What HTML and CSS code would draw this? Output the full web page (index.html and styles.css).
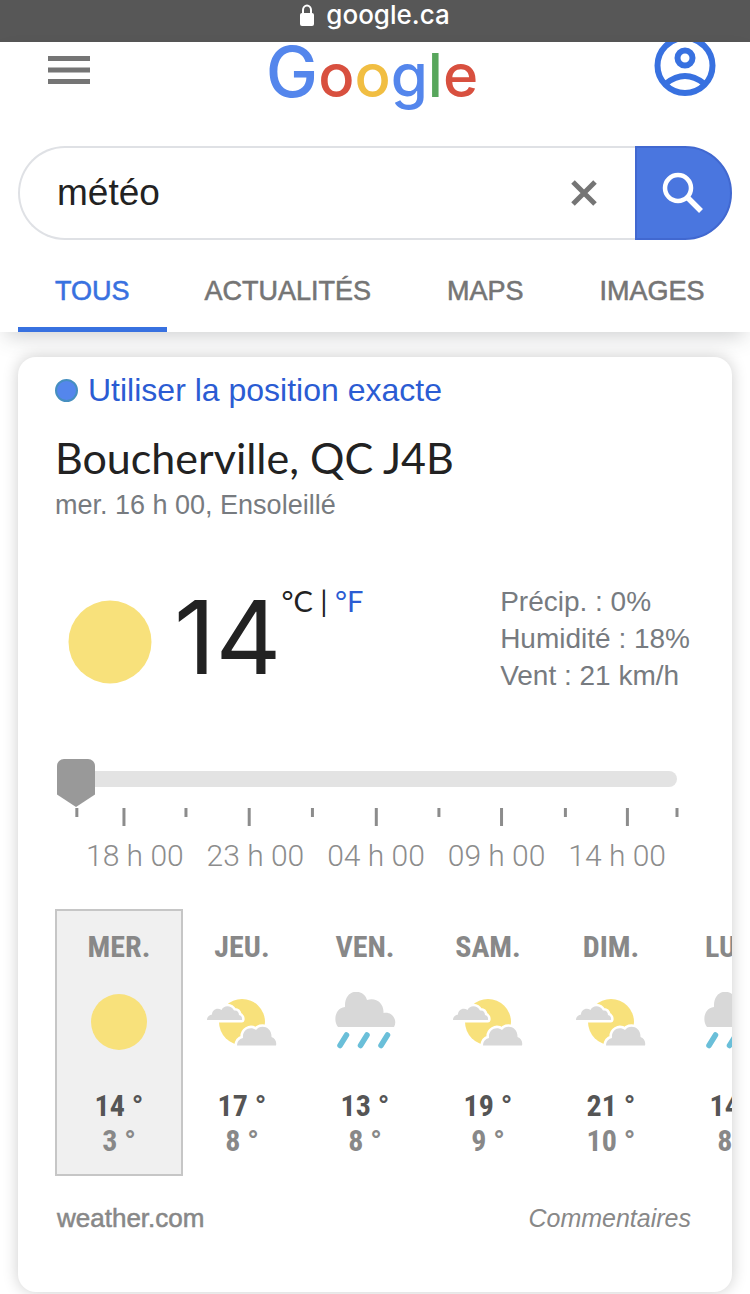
FILE: index.html
```html
<!DOCTYPE html>
<html lang="fr">
<head>
<meta charset="utf-8">
<meta name="viewport" content="width=device-width, initial-scale=1">
<title>météo - Recherche Google</title>
<link rel="stylesheet" href="styles.css">
</head>
<body>
<svg class="defs" aria-hidden="true">
  <symbol id="sun" viewBox="0 0 70 60"><circle cx="35" cy="30" r="28" fill="#f8e17b"/></symbol>
  <symbol id="partly" viewBox="0 0 70 60">
    <circle cx="35" cy="30" r="23" fill="#f8e17b"/>
    <path d="M0 28C0 25 2 23 5 22.500C5 18 10 15 14.500 18C17 13 24 13 27 18.500C30 18 32 20 32 23C34.500 23.500 35.500 26 35 28Z" fill="#fff" stroke="#fff" stroke-width="5" stroke-linejoin="round"/>
    <path d="M30 53.500C30 50 32 47 36 46C35 38 43 33.500 49 38C53 32 65 34 64.500 45C68 46 70 50 69 53.500Z" fill="#fff" stroke="#fff" stroke-width="5" stroke-linejoin="round"/>
    <path d="M0 28C0 25 2 23 5 22.500C5 18 10 15 14.500 18C17 13 24 13 27 18.500C30 18 32 20 32 23C34.500 23.500 35.500 26 35 28ZM30 53.500C30 50 32 47 36 46C35 38 43 33.500 49 38C53 32 65 34 64.500 45C68 46 70 50 69 53.500Z" fill="#d8d8d8"/>
  </symbol>
  <symbol id="rain" viewBox="0 0 70 60">
    <path d="M8 35C3 29 5 16 15 15C14-4 34-4 37 8C46 5 54 11 53.500 21C62 19 68 28 64 35Z" fill="#d8d8d8"/>
    <path d="M16.500 43L10 53.500M37 43L30.500 53.500M57.500 43L51 53.500" stroke="#6abfd9" stroke-width="5.500" stroke-linecap="round"/>
  </symbol>
</svg>

<div class="address">
  <svg class="lock" viewBox="0 0 14 22" aria-hidden="true"><rect y="9" width="14" height="13" rx="2" fill="#fff"/><path d="M3 10V6a4 4.500 0 0 1 8 0v4" fill="none" stroke="#fff" stroke-width="2"/></svg>
  <span>google.ca</span>
</div>

<header class="top">
  <div class="bar">
    <button class="icon-button" aria-label="Menu"><svg class="menu" viewBox="0 0 42 28"><path d="M0 2.500h42M0 14h42M0 25.500h42" stroke="#757575" stroke-width="5"/></svg></button>
    <a class="logo" href="#" aria-label="Google"><span class="b initial">G</span><span class="r">o</span><span class="y">o</span><span class="b">g</span><span class="g">l</span><span class="r">e</span></a>
    <button class="icon-button" aria-label="Compte"><svg class="account" viewBox="0 0 62 54" fill="none" stroke="#3871e0" stroke-width="6"><circle cx="31" cy="23.500" r="27.500"/><circle cx="31" cy="16" r="7.500"/><path d="M12 41.500Q31 26.500 50 41.500"/></svg></button>
  </div>
  <form class="search">
    <input class="query" type="text" value="météo" aria-label="Rechercher">
    <button class="clear" type="button" aria-label="Effacer"><svg class="cross" viewBox="0 0 26 26"><path d="M2 2L24 24M24 2L2 24" stroke="#757575" stroke-width="5"/></svg></button>
    <button class="submit" type="button" aria-label="Rechercher"><svg class="glass" viewBox="0 0 42 42" fill="none" stroke="#fff"><circle cx="16" cy="16" r="13" stroke-width="4.500"/><path d="M26 26L39 39" stroke-width="5.500"/></svg></button>
  </form>
  <nav class="tabs">
    <a class="tab active" href="#">TOUS</a>
    <a class="tab" href="#">ACTUALITÉS</a>
    <a class="tab" href="#">MAPS</a>
    <a class="tab" href="#">IMAGES</a>
  </nav>
</header>

<main class="card">
  <a class="locate" href="#"><span class="dot"></span>Utiliser la position exacte</a>
  <h1 class="place">Boucherville, QC J4B</h1>
  <p class="when">mer. 16 h 00, Ensoleillé</p>

  <section class="current">
    <svg class="big-sun" viewBox="0 0 84 84" aria-hidden="true"><circle cx="42" cy="42" r="41.500" fill="#f8e17b"/></svg>
    <span class="temp">14</span>
    <span class="units">°C | <a href="#">°F</a></span>
    <div class="details">
      <div>Précip. : 0%</div>
      <div>Humidité : 18%</div>
      <div>Vent : 21 km/h</div>
    </div>
  </section>

  <section class="timeline">
    <input class="slider" type="range" min="0" max="24" value="0" aria-label="Heure">
    <svg class="ticks" aria-hidden="true" stroke="#8c8c8c" stroke-width="3">
      <line x1="3.2%" x2="3.2%" y1="0" y2="9"/><line x1="10.8%" x2="10.8%" y1="0" y2="18"/>
      <line x1="20.8%" x2="20.8%" y1="0" y2="9"/><line x1="31%" x2="31%" y1="0" y2="18"/>
      <line x1="41.2%" x2="41.2%" y1="0" y2="9"/><line x1="51.5%" x2="51.5%" y1="0" y2="18"/>
      <line x1="61.6%" x2="61.6%" y1="0" y2="9"/><line x1="71.7%" x2="71.7%" y1="0" y2="18"/>
      <line x1="82%" x2="82%" y1="0" y2="9"/><line x1="92%" x2="92%" y1="0" y2="18"/>
      <line x1="100%" x2="100%" y1="0" y2="9"/>
    </svg>
    <div class="hours"><span>18 h 00</span><span>23 h 00</span><span>04 h 00</span><span>09 h 00</span><span>14 h 00</span></div>
  </section>

  <section class="days">
    <button class="day selected"><span class="name">MER.</span><svg class="sky"><use href="#sun"/></svg><span class="high">14 °</span><span class="low">3 °</span></button>
    <button class="day"><span class="name">JEU.</span><svg class="sky"><use href="#partly"/></svg><span class="high">17 °</span><span class="low">8 °</span></button>
    <button class="day"><span class="name">VEN.</span><svg class="sky"><use href="#rain"/></svg><span class="high">13 °</span><span class="low">8 °</span></button>
    <button class="day"><span class="name">SAM.</span><svg class="sky"><use href="#partly"/></svg><span class="high">19 °</span><span class="low">9 °</span></button>
    <button class="day"><span class="name">DIM.</span><svg class="sky"><use href="#partly"/></svg><span class="high">21 °</span><span class="low">10 °</span></button>
    <button class="day"><span class="name">LUN.</span><svg class="sky"><use href="#rain"/></svg><span class="high">14 °</span><span class="low">8 °</span></button>
  </section>

  <footer class="credits">
    <a class="source" href="#">weather.com</a>
    <a class="feedback" href="#">Commentaires</a>
  </footer>
</main>
</body>
</html>
```

FILE: styles.css
```css
* { box-sizing: border-box; }
body {
  margin: 0;
  background: #fff;
  color: #222;
  font-family: "Liberation Sans", Arial, sans-serif;
  overflow-x: hidden;
}
a { color: inherit; text-decoration: none; }
button { border: 0; padding: 0; background: none; font: inherit; color: inherit; }
svg { display: block; }
.defs { display: none; }

.address {
  display: flex;
  justify-content: center;
  align-items: center;
  gap: 12px;
  height: 42px;
  padding-bottom: 12px;
  background: #575757;
  color: #fff;
  font: 500 26px/28px Inter, sans-serif;
}
.lock { width: 14px; height: 22px; }

.top {
  padding: 0 18px;
  background: #fff;
  box-shadow: 0 10px 20px -6px rgba(60, 64, 67, .25);
}
.bar {
  display: flex;
  justify-content: space-between;
  align-items: flex-start;
  height: 104px;
  padding: 0 16px 0 30px;
}
.menu { width: 42px; height: 28px; margin-top: 14px; }
.account { width: 62px; height: 54px; }
.logo { font: 500 60px/60px Inter, sans-serif; }
.initial { font-size: 70px; }
.b { color: #5486ec; }
.r { color: #d8503f; }
.y { color: #f1be42; }
.g { color: #58a65c; }

.search { display: flex; height: 94px; }
.query {
  flex: 1;
  min-width: 0;
  padding: 0 0 0 37px;
  border: 2px solid #dfe1e5;
  border-right: 0;
  border-radius: 47px 0 0 47px;
  color: #222;
  font: 37px/44px "Liberation Sans", Arial, sans-serif;
  outline: 0;
}
.clear {
  display: grid;
  place-items: center;
  width: 102px;
  border: solid #dfe1e5;
  border-width: 2px 0;
}
.cross { width: 26px; height: 26px; }
.submit {
  display: grid;
  place-items: center;
  width: 97px;
  padding-right: 2px;
  border: 2px solid #4168d0;
  border-radius: 0 47px 47px 0;
  background: #4a76df;
}
.glass { width: 42px; height: 42px; }

.tabs { display: flex; height: 92px; }
.tab {
  padding: 33px 38px 0;
  color: #757575;
  font-size: 27px;
  line-height: 36px;
  -webkit-text-stroke: thin currentColor;
}
.active { padding: 33px 37px 0; border-bottom: 5px solid #3871e0; color: #3871e0; }

.card {
  margin: 25px 18px 2px;
  padding: 14px 0 58px 37px;
  border-radius: 18px;
  background: #fff;
  box-shadow: 0 0 16px rgba(0, 0, 0, .2);
  overflow: hidden;
}
.locate {
  display: flex;
  align-items: center;
  gap: 10px;
  color: #2b5cd3;
  font-size: 32px;
  line-height: 38px;
}
.dot {
  width: 23px;
  height: 23px;
  border: 2px solid #468fc0;
  border-radius: 50%;
  background: #5486ec;
}
.place {
  margin: 23px 0 0;
  font: 400 43px/52px Lato, sans-serif;
}
.when {
  margin: 3px 0 0;
  color: #777b80;
  font-size: 27px;
  line-height: 36px;
}
.current {
  display: flex;
  align-items: flex-start;
  margin-top: 60px;
  padding: 0 42px 0 13px;
}
.big-sun { width: 84px; height: 84px; margin-top: 17px; }
.temp { margin-left: 22px; font: 400 102px/108px Inter, sans-serif; }
.units { font: 400 29px/36px Lato, sans-serif; }
.units a { color: #2b5cd3; }
.details {
  margin-left: auto;
  color: #777b80;
  font-size: 28px;
  line-height: 37px;
}

.timeline { margin: 61px 55px 0 2px; }
.slider {
  display: block;
  width: 100%;
  height: 48px;
  margin: 0;
  appearance: none;
  background: none;
}
.slider::-webkit-slider-runnable-track {
  height: 16px;
  border-radius: 8px;
  background: #e3e3e3;
}
.slider::-webkit-slider-thumb {
  appearance: none;
  width: 38px;
  height: 48px;
  margin-top: -12px;
  border-radius: 7px 7px 0 0;
  background: #999;
  clip-path: polygon(0 0, 100% 0, 100% 74%, 50% 100%, 0 74%);
}
.ticks { width: 100%; height: 30px; margin-top: 5px; overflow: visible; }
.hours {
  display: flex;
  justify-content: space-between;
  padding: 0 11px 0 29px;
  color: #8c8c8c;
  font: 300 30px/36px Roboto, sans-serif;
}

.days { display: flex; margin-top: 35px; overflow: hidden; }
.day {
  flex: none;
  display: flex;
  flex-direction: column;
  align-items: center;
  width: 128px;
  height: 267px;
  margin-right: -5px;
  padding-top: 18px;
  border: 2px solid transparent;
  color: #888;
  font: 700 30px/35px "Liberation Sans Narrow", "Roboto Condensed", "Liberation Sans", sans-serif;
}
.selected { border-color: #c6c6c6; background: #f0f0f0; }
.sky { width: 70px; height: 60px; margin: 28px 0 36px; }
.high { color: #555; }

.credits {
  display: flex;
  justify-content: space-between;
  align-items: center;
  margin-top: 26px;
  padding: 0 41px 0 2px;
  color: #888;
  line-height: 32px;
}
.source { font-size: 26px; -webkit-text-stroke: thin currentColor; }
.feedback { font-size: 25px; font-style: italic; }
```
